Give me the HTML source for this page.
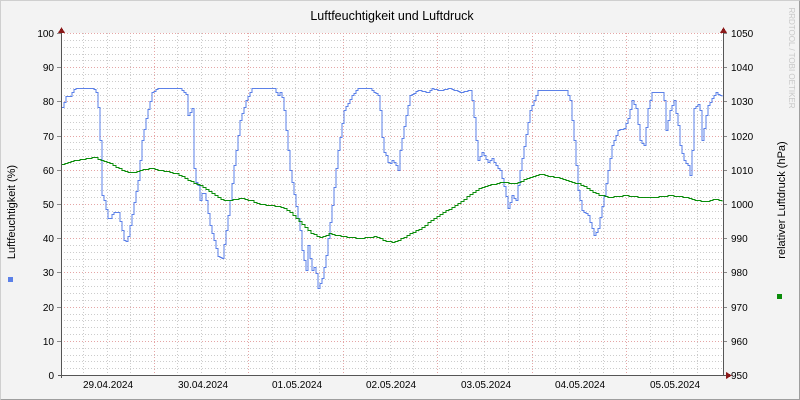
<!DOCTYPE html>
<html><head><meta charset="utf-8"><style>
html,body{margin:0;padding:0;background:#f3f3f3}
svg{display:block;font-family:"Liberation Sans","DejaVu Sans",sans-serif}
</style></head><body>
<svg width="800" height="400" viewBox="0 0 800 400" xmlns="http://www.w3.org/2000/svg" shape-rendering="crispEdges">
<rect x="0" y="0" width="800" height="400" fill="#f3f3f3"/>
<path d="M0.5 399.5V0.5H799.5" stroke="#cfcfcf" fill="none"/>
<path d="M0.5 399.5H799.5V0.5" stroke="#9e9e9e" fill="none"/>
<rect x="61" y="33" width="662" height="342" fill="#ffffff"/>
<g stroke="#cccccc" stroke-dasharray="1,2" stroke-width="1">
<path d="M61 40.5H723M61 47.5H723M61 54.5H723M61 60.5H723M61 74.5H723M61 81.5H723M61 88.5H723M61 95.5H723M61 108.5H723M61 115.5H723M61 122.5H723M61 129.5H723M61 142.5H723M61 149.5H723M61 156.5H723M61 163.5H723M61 177.5H723M61 184.5H723M61 190.5H723M61 197.5H723M61 211.5H723M61 218.5H723M61 225.5H723M61 231.5H723M61 245.5H723M61 252.5H723M61 259.5H723M61 266.5H723M61 279.5H723M61 286.5H723M61 293.5H723M61 300.5H723M61 314.5H723M61 320.5H723M61 327.5H723M61 334.5H723M61 348.5H723M61 355.5H723M61 361.5H723M61 368.5H723"/>
<path d="M83.5 33V375M107.5 33V375M130.5 33V375M177.5 33V375M201.5 33V375M225.5 33V375M272.5 33V375M295.5 33V375M319.5 33V375M366.5 33V375M390.5 33V375M413.5 33V375M461.5 33V375M484.5 33V375M508.5 33V375M555.5 33V375M579.5 33V375M603.5 33V375M650.5 33V375M673.5 33V375M697.5 33V375"/>
</g>
<g stroke="#e5a5a5" stroke-dasharray="1,2" stroke-width="1">
<path d="M61 33.5H723M61 67.5H723M61 101.5H723M61 136.5H723M61 170.5H723M61 204.5H723M61 238.5H723M61 272.5H723M61 307.5H723M61 341.5H723"/>
<path d="M154.5 33V375M248.5 33V375M343.5 33V375M437.5 33V375M532.5 33V375M626.5 33V375"/>
</g>
<g stroke="#888" stroke-width="1">
<path d="M57 33.5H61M57 67.5H61M57 101.5H61M57 136.5H61M57 170.5H61M57 204.5H61M57 238.5H61M57 272.5H61M57 307.5H61M57 341.5H61"/>
<path d="M723 33.5H727M723 67.5H727M723 101.5H727M723 136.5H727M723 170.5H727M723 204.5H727M723 238.5H727M723 272.5H727M723 307.5H727M723 341.5H727"/>
</g>
<path id="blue" fill="none" stroke="#5b80e8" stroke-width="1"/>
<path id="green" fill="none" stroke="#0a8c0a" stroke-width="1.3"/>
<path d="M61.5 30V378M723.5 30V375M58 375.5H726" stroke="#555" stroke-width="1"/>
<path d="M58 33L61.5 27L65 33Z M720 33L723.5 27L727 33Z M726 372L732 375.5L726 379Z" fill="#8b1a1a"/>
<g font-size="10" fill="#000" text-anchor="end">
<text x="54" y="37">100</text><text x="54" y="71">90</text><text x="54" y="105">80</text><text x="54" y="140">70</text><text x="54" y="174">60</text><text x="54" y="208">50</text><text x="54" y="242">40</text><text x="54" y="276">30</text><text x="54" y="311">20</text><text x="54" y="345">10</text><text x="54" y="379">0</text>
</g>
<g font-size="10" fill="#000">
<text x="731" y="37">1050</text><text x="731" y="71">1040</text><text x="731" y="105">1030</text><text x="731" y="140">1020</text><text x="731" y="174">1010</text><text x="731" y="208">1000</text><text x="731" y="242">990</text><text x="731" y="276">980</text><text x="731" y="311">970</text><text x="731" y="345">960</text><text x="731" y="379">950</text>
</g>
<g font-size="10" fill="#000" text-anchor="middle">
<text x="108" y="388">29.04.2024</text><text x="203" y="388">30.04.2024</text><text x="297" y="388">01.05.2024</text><text x="391" y="388">02.05.2024</text><text x="486" y="388">03.05.2024</text><text x="580" y="388">04.05.2024</text><text x="675" y="388">05.05.2024</text>
</g>
<text x="392" y="20" font-size="12.5" text-anchor="middle" fill="#000">Luftfeuchtigkeit und Luftdruck</text>
<text transform="translate(15,212) rotate(-90)" font-size="11" text-anchor="middle" fill="#000">Luftfeuchtigkeit (%)</text>
<text transform="translate(785,200) rotate(-90)" font-size="11" text-anchor="middle" fill="#000">relativer Luftdruck (hPa)</text>
<text transform="translate(789,58) rotate(90)" font-size="8" text-anchor="middle" fill="#c8c8c8">RRDTOOL / TOBI OETIKER</text>
<rect x="8" y="277" width="5" height="5" fill="#5b80e8"/>
<rect x="777" y="294" width="5" height="5" fill="#0a8c0a"/>
</svg>
<script>
function steps(pts, step){
  var a=pts.trim().split(/\s+/).map(function(p){var q=p.split(',');return [+q[0],+q[1]];});
  function f(x){for(var i=1;i<a.length;i++){if(x<=a[i][0]){var t=(x-a[i-1][0])/(a[i][0]-a[i-1][0]||1);return a[i-1][1]+t*(a[i][1]-a[i-1][1]);}}return a[a.length-1][1];}
  var x=62, y=Math.round(f(62))+0.5, d="M"+x+" "+y;
  for(x=62+step;x<=723;x+=step){var ny=Math.round(f(x))+0.5;d+="H"+x;if(ny!==y){d+="V"+ny;y=ny;}}
  return d;
}
document.getElementById('blue').setAttribute('d',steps("61,110 66,96 70,96 72,92 75,88 93,88 96,92 98,107 100,140 102,195 104,200 108,218 110,218 113,212 118,212 121,225 124,240 127,242 130,225 134,202 138,180 142,140 146,118 152,92 158,88 180,88 186,94 188,115 192,108 193,155 195,180 198,185 200,200 203,190 206,200 210,225 214,240 218,256 222,258 226,230 230,200 234,165 240,120 246,100 252,88 274,88 278,95 281,90 284,110 290,170 295,200 300,230 302,250 306,270 308,245 312,270 315,265 318,288 322,278 326,255 332,205 338,150 344,110 352,95 358,88 370,88 378,95 380,110 383,150 386,155 389,165 392,160 395,163 398,170 400,150 405,120 410,95 418,90 428,92 432,88 440,90 450,88 460,92 470,90 473,105 476,140 478,160 482,152 488,162 492,158 496,165 500,170 505,190 508,208 512,195 516,200 520,170 525,140 530,110 538,90 566,90 570,100 574,140 578,190 582,210 588,215 594,235 598,228 604,195 608,170 612,145 618,130 624,128 628,118 632,100 636,108 640,140 644,145 648,108 652,92 662,92 664,100 666,130 670,110 674,100 678,125 680,145 684,160 688,165 690,175 692,150 694,108 698,104 700,110 702,140 706,115 708,105 712,98 716,92 718,94 722,96",2));
document.getElementById('green').setAttribute('d',steps("61,165 66,162 75,160 95,157 100,160 110,163 118,168 128,172 135,172 140,170 150,168 160,170 170,172 176,173 183,177 190,181 200,185 210,192 218,197 222,200 230,200 240,198 250,200 258,203 265,205 280,206 290,212 300,222 310,232 320,237 330,233 340,236 360,238 375,236 384,240 392,242 398,240 405,236 420,228 440,214 460,202 475,190 485,186 500,182 515,183 530,177 540,174 560,178 580,184 590,190 600,195 610,197 625,195 640,197 655,197 670,195 685,197 695,200 705,201 715,199 722,201",3));
</script>
</body></html>
